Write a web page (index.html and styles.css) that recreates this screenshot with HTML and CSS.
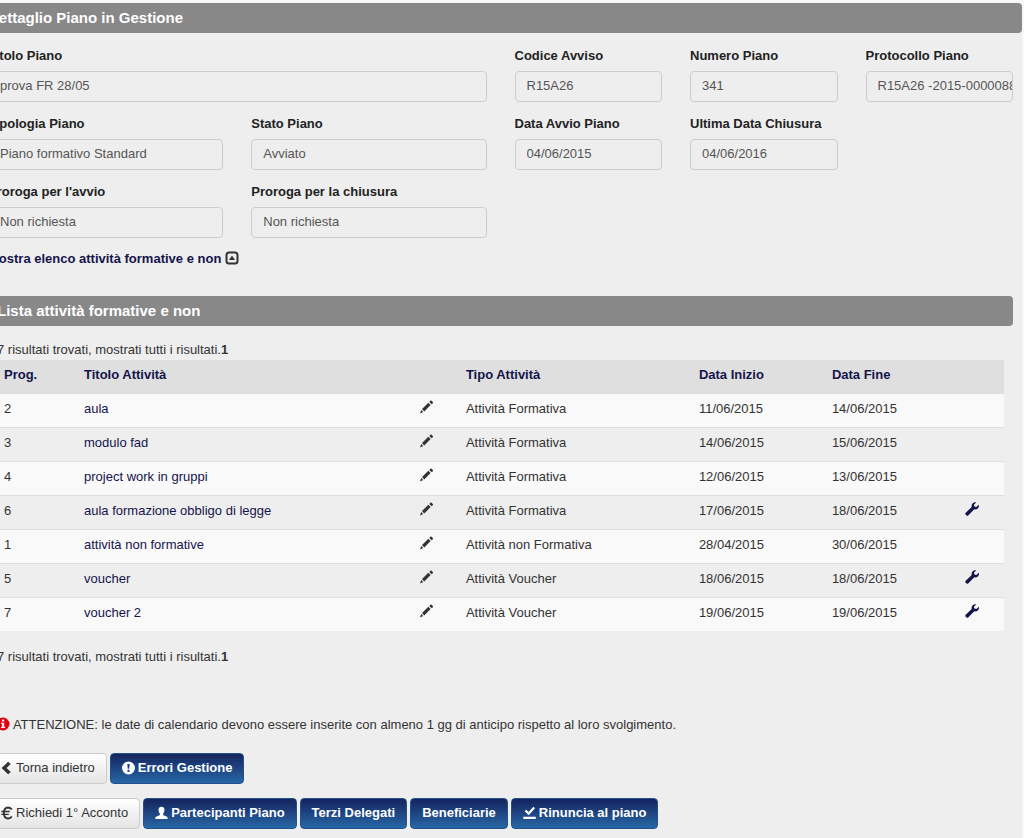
FILE: index.html
```html
<!DOCTYPE html>
<html lang="it">
<head>
<meta charset="utf-8">
<title>Dettaglio Piano in Gestione</title>
<link rel="stylesheet" href="styles.css">
</head>
<body>
<svg class="sprite" aria-hidden="true">
  <symbol id="pencil" viewBox="0 0 14 14"><path d="M0 13.500l1.200-3.500 2.100 2.100zM2 9.100l6.300-6.300 2.300 2.300-6.300 6.300zM9.300 1.900l1.100-1.100q.6-.5 1.200 0l1.200 1.200q.5.600 0 1.200l-1.100 1.100z"/></symbol>
  <symbol id="wrench" viewBox="0 0 14 14"><path d="M11.300.3L8.900 2.700l.5 1.900 1.900.5 2.500-2.300q.6 2.200-1 3.700-1.500 1.300-3.500.8L3.400 13.200q-1 1-2.300.1-1.400-1.200-.4-2.500L6.700 5Q6.200 2.700 7.700 1.300 9.200-.2 11.300.3z"/></symbol>
  <symbol id="chevron" viewBox="0 0 14 14"><path d="M8.700.4l2.900 2.400L7.100 7l4.500 4.200-2.900 2.400L1.700 7z"/></symbol>
  <symbol id="exclaim" viewBox="0 0 14 14"><path fill-rule="evenodd" d="M7 0a7 7 0 1 1 0 14A7 7 0 0 1 7 0zM5.700 2.600l.5 5.200h1.600l.5-5.200zM5.900 9v2.200h2.200V9z"/></symbol>
  <symbol id="info" viewBox="0 0 14 14"><path fill-rule="evenodd" d="M7 .5a6.500 6.500 0 1 1 0 13 6.500 6.500 0 0 1 0-13zM5.900 2.500v2h2.300v-2zM5 5.700v1.200h1v2.900H5V11h4.200V9.800h-1V5.700z"/></symbol>
  <symbol id="euro" viewBox="0 0 14 14"><path fill="none" stroke="currentColor" stroke-width="2" d="M12.700 3.300Q11.500 1.100 8.700 1.100 4.200 1.300 4.200 7t4.500 5.900q2.800 0 4-2.300"/><path d="M1.700 4.700h9l-.5 1.500h-9zM1.700 7.700h8l-.5 1.500h-8z"/></symbol>
  <symbol id="user" viewBox="0 0 14 14"><path d="M7 .3c2.300 0 3.300 1.500 3.200 3.600C10.100 6 9.300 7 8.700 8v1.200l4.200 1.800q.8.400.8 2.500H.3q0-2.100.8-2.500l4.200-1.800V8C4.700 7 3.900 6 3.800 3.900 3.700 1.800 4.700.3 7 .3z"/></symbol>
  <symbol id="check" viewBox="0 0 14 14"><path d="M.3 11h13.400v2.500H.3zM1.800 5.200l1.700-1.600L6 6 11.200.3l1.700 1.600L6.100 9.400z"/></symbol>
  <symbol id="expand" viewBox="0 0 14 14"><rect x="1.500" y="1.500" width="11" height="11" rx="2.500" fill="none" stroke="currentColor" stroke-width="2"/><path d="M7 4.500L10 9H4z"/></symbol>
</svg>
<main class="page">
  <section class="panel">
    <h1 class="bar">Dettaglio Piano in Gestione</h1>
    <form class="fields">
      <div class="field half"><label for="titolo">Titolo Piano</label><input id="titolo" value="prova FR 28/05" readonly></div>
      <div class="field small"><label for="codice">Codice Avviso</label><input id="codice" value="R15A26" readonly></div>
      <div class="field small"><label for="numero">Numero Piano</label><input id="numero" value="341" readonly></div>
      <div class="field small"><label for="protocollo">Protocollo Piano</label><input id="protocollo" value="R15A26 -2015-0000088" readonly></div>
      <div class="field"><label for="tipologia">Tipologia Piano</label><input id="tipologia" value="Piano formativo Standard" readonly></div>
      <div class="field"><label for="stato">Stato Piano</label><input id="stato" value="Avviato" readonly></div>
      <div class="field small"><label for="avvio">Data Avvio Piano</label><input id="avvio" value="04/06/2015" readonly></div>
      <div class="field small"><label for="chiusura">Ultima Data Chiusura</label><input id="chiusura" value="04/06/2016" readonly></div>
      <div class="field first"><label for="pavvio">Proroga per l'avvio</label><input id="pavvio" value="Non richiesta" readonly></div>
      <div class="field"><label for="pchiusura">Proroga per la chiusura</label><input id="pchiusura" value="Non richiesta" readonly></div>
    </form>
    <a class="toggle" href="#lista">Mostra elenco attività formative e non <svg class="icon"><use href="#expand"/></svg></a>
  </section>

  <section class="list" id="lista">
    <h2 class="bar">Lista attività formative e non</h2>
    <p class="count">7 risultati trovati, mostrati tutti i risultati.<b>1</b></p>
    <table class="grid">
      <colgroup><col class="c-prog"><col class="c-title"><col class="c-edit"><col class="c-type"><col class="c-date"><col class="c-date"><col class="c-tools"></colgroup>
      <thead><tr><th><a href="#">Prog.</a></th><th><a href="#">Titolo Attività</a></th><th></th><th><a href="#">Tipo Attività</a></th><th><a href="#">Data Inizio</a></th><th><a href="#">Data Fine</a></th><th></th></tr></thead>
      <tbody>
        <tr><td>2</td><td><a href="#">aula</a></td><td class="edit"><a href="#" aria-label="Modifica"><svg class="icon"><use href="#pencil"/></svg></a></td><td>Attività Formativa</td><td>11/06/2015</td><td>14/06/2015</td><td></td></tr>
        <tr><td>3</td><td><a href="#">modulo fad</a></td><td class="edit"><a href="#" aria-label="Modifica"><svg class="icon"><use href="#pencil"/></svg></a></td><td>Attività Formativa</td><td>14/06/2015</td><td>15/06/2015</td><td></td></tr>
        <tr><td>4</td><td><a href="#">project work in gruppi</a></td><td class="edit"><a href="#" aria-label="Modifica"><svg class="icon"><use href="#pencil"/></svg></a></td><td>Attività Formativa</td><td>12/06/2015</td><td>13/06/2015</td><td></td></tr>
        <tr><td>6</td><td><a href="#">aula formazione obbligo di legge</a></td><td class="edit"><a href="#" aria-label="Modifica"><svg class="icon"><use href="#pencil"/></svg></a></td><td>Attività Formativa</td><td>17/06/2015</td><td>18/06/2015</td><td><a href="#" aria-label="Gestisci"><svg class="icon"><use href="#wrench"/></svg></a></td></tr>
        <tr><td>1</td><td><a href="#">attività non formative</a></td><td class="edit"><a href="#" aria-label="Modifica"><svg class="icon"><use href="#pencil"/></svg></a></td><td>Attività non Formativa</td><td>28/04/2015</td><td>30/06/2015</td><td></td></tr>
        <tr><td>5</td><td><a href="#">voucher</a></td><td class="edit"><a href="#" aria-label="Modifica"><svg class="icon"><use href="#pencil"/></svg></a></td><td>Attività Voucher</td><td>18/06/2015</td><td>18/06/2015</td><td><a href="#" aria-label="Gestisci"><svg class="icon"><use href="#wrench"/></svg></a></td></tr>
        <tr><td>7</td><td><a href="#">voucher 2</a></td><td class="edit"><a href="#" aria-label="Modifica"><svg class="icon"><use href="#pencil"/></svg></a></td><td>Attività Voucher</td><td>19/06/2015</td><td>19/06/2015</td><td><a href="#" aria-label="Gestisci"><svg class="icon"><use href="#wrench"/></svg></a></td></tr>
      </tbody>
    </table>
    <p class="count">7 risultati trovati, mostrati tutti i risultati.<b>1</b></p>
    <p class="warning"><svg class="icon"><use href="#info"/></svg> ATTENZIONE: le date di calendario devono essere inserite con almeno 1 gg di anticipo rispetto al loro svolgimento.</p>
  </section>

  <div class="actions">
    <button type="button" class="btn"><svg class="icon"><use href="#chevron"/></svg>Torna indietro</button>
    <button type="button" class="btn primary"><svg class="icon"><use href="#exclaim"/></svg>Errori Gestione</button>
  </div>
  <div class="actions">
    <button type="button" class="btn"><svg class="icon"><use href="#euro"/></svg>Richiedi 1° Acconto</button>
    <button type="button" class="btn primary"><svg class="icon"><use href="#user"/></svg>Partecipanti Piano</button>
    <button type="button" class="btn primary">Terzi Delegati</button>
    <button type="button" class="btn primary">Beneficiarie</button>
    <button type="button" class="btn primary"><svg class="icon"><use href="#check"/></svg>Rinuncia al piano</button>
  </div>
</main>
</body>
</html>
```
FILE: styles.css
```css
* { box-sizing: border-box; }
body {
  margin: 0;
  background: #eee;
  color: #333;
  font: 13px/20px "Liberation Sans", Arial, sans-serif;
  overflow-x: hidden;
}
h1, h2, p { margin: 0; }
a { color: #14144b; text-decoration: none; }
.sprite { position: absolute; width: 0; height: 0; }
.icon { width: 14px; height: 14px; fill: currentColor; vertical-align: -2px; }

/* The page runs under the left edge of the viewport. */
.page {
  margin-left: -14px;
  border-top: 3px solid #f8f8f8;
  border-right: 2px solid #f8f8f8;
  padding-bottom: 9px;
}
.bar {
  height: 30px;
  padding-left: 2px;
  background: #888;
  border-radius: 4px;
  color: #fff;
  font-size: 15px;
  line-height: 30px;
}
.fields {
  display: grid;
  grid-template-columns: repeat(12, minmax(0, 1fr));
  gap: 12px 28px;
  padding: 13px 9px 0 2px;
}
.field { grid-column: span 3; display: grid; gap: 5px; }
.half { grid-column: span 6; }
.small { grid-column: span 2; }
.first { grid-column: 1 / span 3; }
.field label { color: #222; font-weight: bold; }
.field input {
  width: 100%;
  height: 31px;
  padding: 0 0 2px 11px;
  border: 1px solid #ccc;
  border-radius: 4px;
  background: #eee;
  color: #555;
  font: inherit;
}
.toggle { display: inline-block; margin: 11px 0 0 2px; font-weight: bold; }
.toggle .icon { color: #333; }

.list { margin: 27px 9px 0 7px; }
.list .bar { padding-left: 4px; }
.count { padding: 14px 0 0 4px; }
.grid {
  width: calc(100% - 15px);
  margin-left: 6px;
  border-collapse: collapse;
  table-layout: fixed;
}
.c-prog { width: 80px; }
.c-title { width: 33%; }
.c-edit { width: 5%; }
.c-type { width: 233px; }
.c-date { width: 133px; }
.grid th, .grid td { height: 34px; padding: 0 5px 2px; text-align: left; }
.grid th { height: 33px; background: #dfdfdf; }
.grid td { border-top: 1px solid #ddd; }
.grid tbody tr:nth-child(odd) { background: #f9f9f9; }
.grid .icon { vertical-align: -1px; }
.grid .edit { padding-left: 9px; }
.edit a { color: #333; }
.grid + .count { padding-top: 16px; }
.warning { padding: 48px 0 0 3px; }
.warning .icon { color: #e3000f; }

.actions { display: flex; gap: 3px; margin: 14px 0 0 2px; }
.list + .actions { margin-top: 18px; }
.btn {
  display: inline-flex;
  align-items: center;
  gap: 3px;
  height: 31px;
  padding: 0 11px 2px;
  border: 1px solid #ccc;
  border-radius: 4px;
  background: linear-gradient(#fff, #e4e4e4);
  color: #333;
  font: inherit;
}
.btn .icon { width: 13px; }
.primary {
  border-color: #22528a;
  background: linear-gradient(#15245f, #2767a5);
  color: #fff;
  font-weight: bold;
}
```
